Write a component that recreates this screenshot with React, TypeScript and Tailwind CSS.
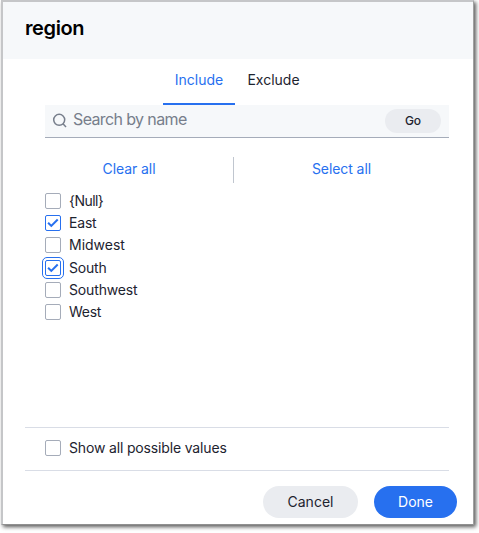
import React from "react";

type BoxProps = { checked?: boolean; focused?: boolean };

function CheckBox({ checked, focused }: BoxProps) {
  return (
    <span
      className={`block size-4 shrink-0 rounded-[2px] border bg-white ${
        checked ? "border-[#2770ef]" : "border-[#a5acb9]"
      } ${focused ? "outline outline-1 outline-offset-2 outline-[#2770ef]" : ""}`}
    >
      {checked && (
        <svg viewBox="0 0 14 14" className="block size-[14px]" fill="none" stroke="#2770ef" strokeWidth="2">
          <path d="M2.1 6.7 5.3 9.9 11.7 3.5" />
        </svg>
      )}
    </span>
  );
}

const rows = [
  { label: "{Null}", spacing: "tracking-[-0.55px] pb-px" },
  { label: "East", checked: true, spacing: "tracking-[-0.2px] pb-px" },
  { label: "Midwest", spacing: "tracking-[-0.02px] pb-px" },
  { label: "South", checked: true, focused: true, spacing: "tracking-[-0.2px]" },
  { label: "Southwest", spacing: "tracking-[-0.15px]" },
  { label: "West", spacing: "tracking-[-0.3px] pb-px" },
];

export default function App() {
  return (
    <div className="h-[533px] w-[479px] overflow-hidden bg-white pl-px font-['Inter',sans-serif] text-[14px] text-[#1d232f]">
      <div className="flex h-[525px] w-[473px] flex-col border-2 border-r border-b border-[#c5c6c8] border-r-[#a0a0a0] border-b-[#909090] bg-white shadow-[2px_2px_4px_rgba(0,0,0,0.65)]">
        <header className="flex h-[57px] shrink-0 items-center bg-[#f6f8fa] pb-[6px] pl-[22px]">
          <h1 className="text-[20px] leading-6 font-semibold tracking-[-0.4px] text-black">region</h1>
        </header>

        <nav className="flex h-[46px] shrink-0 pl-40">
          <button className="h-full w-[72px] border-b-2 border-[#2770ef] pb-[3px] text-[14px] tracking-[0.03px] text-[#2770ef]">
            Include
          </button>
          <button className="h-full w-[76px] pb-[5px] pl-px text-[14px]">Exclude</button>
        </nav>

        <div className="ml-[42px] flex h-[33px] w-[404px] shrink-0 items-center border-b border-[#a5acb9] bg-[#f6f8fa] pr-2 pl-[7px]">
          <svg viewBox="0 0 16 16" className="size-4" fill="none" stroke="#777e8b" strokeWidth="1.5">
            <circle cx="7.2" cy="6.8" r="5.5" />
            <path d="m11 10.8 3 3.1" />
          </svg>
          <span className="ml-[5px] pb-1 text-[16px] tracking-[-0.62px] text-[#777e8b]">Search by name</span>
          <button className="ml-auto h-6 w-14 rounded-full bg-[#eaecf0] text-[12px] font-medium">Go</button>
        </div>

        <div className="mt-[19px] ml-[42px] flex h-[26px] w-[404px] shrink-0 text-[#2770ef]">
          <button className="w-[189px] border-r border-[#c0c6cf] pr-5 pb-[3px] tracking-[-0.08px]">Clear all</button>
          <button className="w-[215px] pb-[3px] tracking-[-0.08px]">Select all</button>
        </div>

        <ul className="mt-[7px] ml-[42px] flex h-[237px] shrink-0 flex-col">
          {rows.map((row) => (
            <li key={row.label} className="flex h-[22.2px] items-center gap-2">
              <CheckBox checked={row.checked} focused={row.focused} />
              <span className={`leading-5 ${row.spacing}`}>{row.label}</span>
            </li>
          ))}
        </ul>

        <div className="ml-[22px] flex h-[44px] w-[424px] shrink-0 items-center gap-2 border-y border-[#d9dde6] pl-5">
          <div className="pb-[2px]">
            <CheckBox />
          </div>
          <span className="pb-[3px] tracking-[-0.16px]">Show all possible values</span>
        </div>

        <footer className="mt-[15px] flex justify-end gap-4 pr-4">
          <button className="h-8 w-[95px] rounded-full bg-[#eaecf0] pb-[2px] text-[14px]">Cancel</button>
          <button className="h-8 w-[83px] rounded-full bg-[#2770ef] pb-[2px] text-[14px] text-white">Done</button>
        </footer>
      </div>
    </div>
  );
}
